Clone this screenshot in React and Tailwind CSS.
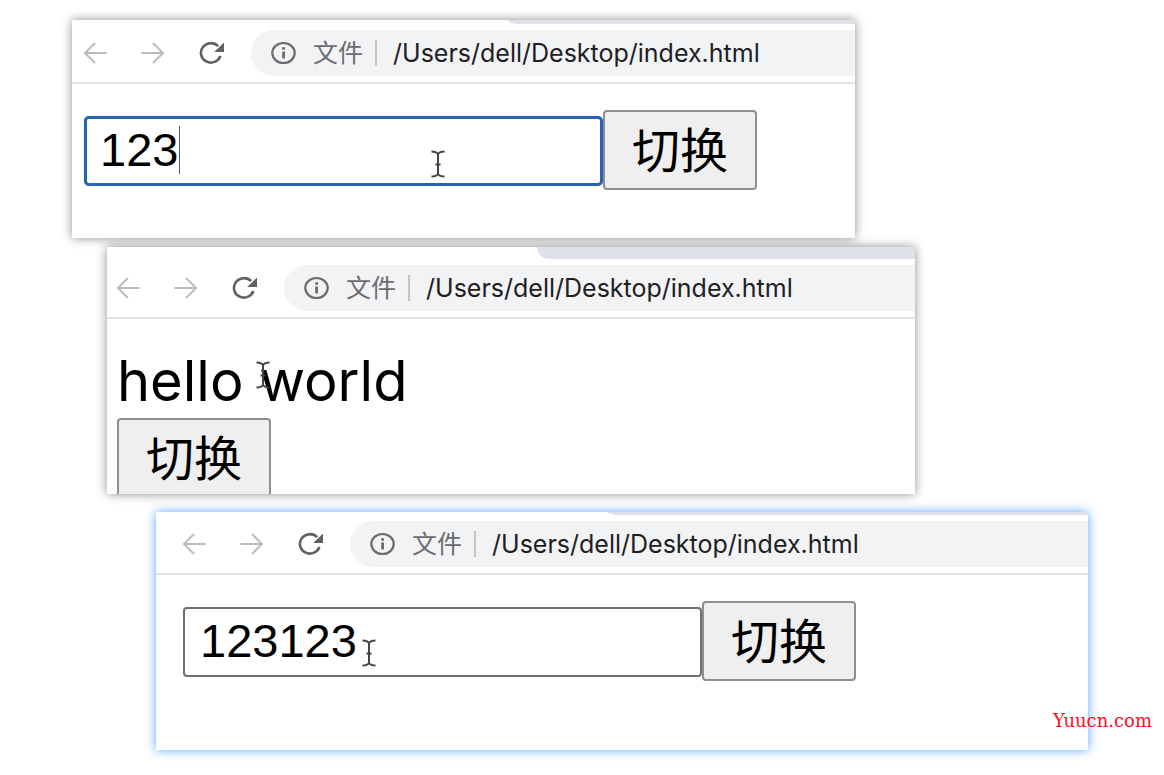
import React from 'react';
import clsx from 'clsx';

const BackIcon = () => (
  <svg className="h-6 w-6" viewBox="0 0 24 24" fill="none" stroke="currentColor" strokeWidth="2">
    <path d="M23.5 12H2M12 2L2 12l10 10" />
  </svg>
);

const ForwardIcon = () => (
  <svg className="h-6 w-6" viewBox="0 0 24 24" fill="none" stroke="currentColor" strokeWidth="2">
    <path d="M.5 12H22M12 2l10 10-10 10" />
  </svg>
);

const ReloadIcon = () => (
  <svg className="h-6 w-7" viewBox="0 0 28 24">
    <path
      d="M21.4 15A10 9.7 0 1 1 19.2 5.2"
      fill="none"
      stroke="currentColor"
      strokeWidth="2.6"
    />
    <path d="M25 1.6V11H15.2z" fill="currentColor" />
  </svg>
);

const InfoIcon = () => (
  <svg className="h-6 w-[26px] shrink-0" viewBox="0 0 26 24">
    <ellipse cx="12.5" cy="12" rx="11.2" ry="10" fill="none" stroke="currentColor" strokeWidth="2.2" />
    <path d="M11.2 6.3h2.8v2.5h-2.8zM11.2 10.6h2.8v7h-2.8z" fill="currentColor" />
  </svg>
);

const TextCursor = ({ className }) => (
  <svg
    className={clsx('pointer-events-none absolute h-7 w-4', className)}
    viewBox="0 0 16 28"
    fill="none"
    stroke="#444"
    strokeWidth="2"
  >
    <path d="M1.5 1.5c3.5 0 5.5 1 6.5 2.5 1-1.5 3-2.5 6.5-2.5M8 4v20M1.5 26.5c3.5 0 5.5-1 6.5-2.5 1 1.5 3 2.5 6.5 2.5M5.5 14.5h5" />
  </svg>
);

const AddressBar = ({ id, inset, stripHeight }) => (
  <header className={clsx('border-b-2 border-[#e2e2e4] pb-1.5', inset)}>
    <div className={clsx('mb-1.5 flex items-end overflow-hidden', stripHeight)}>
      <div className="ml-[421px] h-3 flex-1 shrink-0 rounded-bl-xl bg-[#dee1e8]"></div>
    </div>
    <div className="flex items-center">
      <nav className="flex w-[168px] shrink-0 items-center gap-[34px]">
        <button type="button" aria-label="Back" className="text-[#bcbcbc]">
          <BackIcon />
        </button>
        <button type="button" aria-label="Forward" className="text-[#bcbcbc]">
          <ForwardIcon />
        </button>
        <button type="button" aria-label="Reload" className="text-[#5f6164]">
          <ReloadIcon />
        </button>
      </nav>
      <div className="flex h-[46px] min-w-0 flex-1 items-center rounded-l-full bg-[#f2f3f5] pl-5 text-[#6b6c6f]">
        <InfoIcon />
        <label
          htmlFor={id}
          className="ml-4 shrink-0 pb-1 font-['Noto_Sans_CJK_SC',sans-serif] text-[25px] leading-8"
        >
          文件
        </label>
        <span className="mr-4 ml-3 h-[26px] w-0.5 shrink-0 bg-[#c4c5c8]"></span>
        <input
          id={id}
          type="text"
          readOnly
          value="/Users/dell/Desktop/index.html"
          className="min-w-0 flex-1 bg-transparent font-['Inter',sans-serif] text-[25px] leading-8 text-[#1f2023] outline-none"
        />
      </div>
    </div>
  </header>
);

const SwitchButton = () => (
  <button
    type="button"
    className="h-20 w-[154px] shrink-0 rounded-[4px] border-2 border-[#8f8f8f] bg-[#efefef] pb-1.5 font-['Noto_Sans_CJK_SC',sans-serif] text-[48px] leading-[64px] text-black"
  >
    切换
  </button>
);

const TextBox = ({ label, value, className }) => (
  <input
    type="text"
    aria-label={label}
    defaultValue={value}
    className={clsx(
      "mt-0.5 h-[70px] w-[519px] min-w-0 bg-white pb-0.5 font-['Liberation_Sans',Arial,sans-serif] text-[47px] text-black outline-none",
      className
    )}
  />
);

const App = () => {
  return (
    <main className="relative min-h-screen bg-white pt-5 pb-6">
      {/* Input with focus */}
      <section className="relative mr-[309px] ml-[72px] overflow-hidden bg-white pb-12 shadow-[0_0_10px_rgba(0,0,0,0.45)]">
        <AddressBar id="url-focused" inset="pl-[11px]" stripHeight="h-1" />
        <div className="flex items-center pt-[26px] pl-3">
          <TextBox
            label="Focused text"
            value="123"
            className="rounded-[5px] border-[3px] border-[#2a62b4] px-[13px] shadow-[0_0_1px_#6aa6f0]"
          />
          <SwitchButton />
        </div>
        <span className="absolute top-[106px] left-[107px] h-12 w-px bg-[#555]"></span>
        <TextCursor className="top-[130px] left-[358px]" />
      </section>

      {/* Switched to plain text */}
      <section className="relative mt-[9px] mr-[249px] ml-[107px] overflow-hidden bg-white shadow-[0_0_10px_rgba(0,0,0,0.45)]">
        <AddressBar id="url-text" inset="pl-[9px]" stripHeight="h-3" />
        <div className="-mb-1 pt-7 pl-2.5">
          <p className="h-[71px] font-['Inter',sans-serif] text-[56px] leading-[68px] text-black">hello world</p>
          <SwitchButton />
        </div>
        <TextCursor className="top-[114px] left-[148px]" />
      </section>

      {/* Switched back to the input */}
      <section className="relative mt-[18px] mr-[76px] ml-[156px] overflow-hidden bg-white pb-[69px] shadow-[0_0_10px_#58a8ff]">
        <AddressBar id="url-restored" inset="pl-[26px]" stripHeight="h-[3px]" />
        <div className="flex items-center pt-[26px] pl-[27px]">
          <TextBox
            label="Restored text"
            value="123123"
            className="rounded-[4px] border-2 border-[#6f6f6f] px-[15px]"
          />
          <SwitchButton />
        </div>
        <TextCursor className="top-[127px] left-[205px]" />
      </section>

      <a
        href="#"
        className="absolute right-3 bottom-[42px] font-['DejaVu_Serif',serif] text-[18px] leading-6 text-[#ff0d1d]"
      >
        Yuucn.com
      </a>
    </main>
  );
};

export default App;
